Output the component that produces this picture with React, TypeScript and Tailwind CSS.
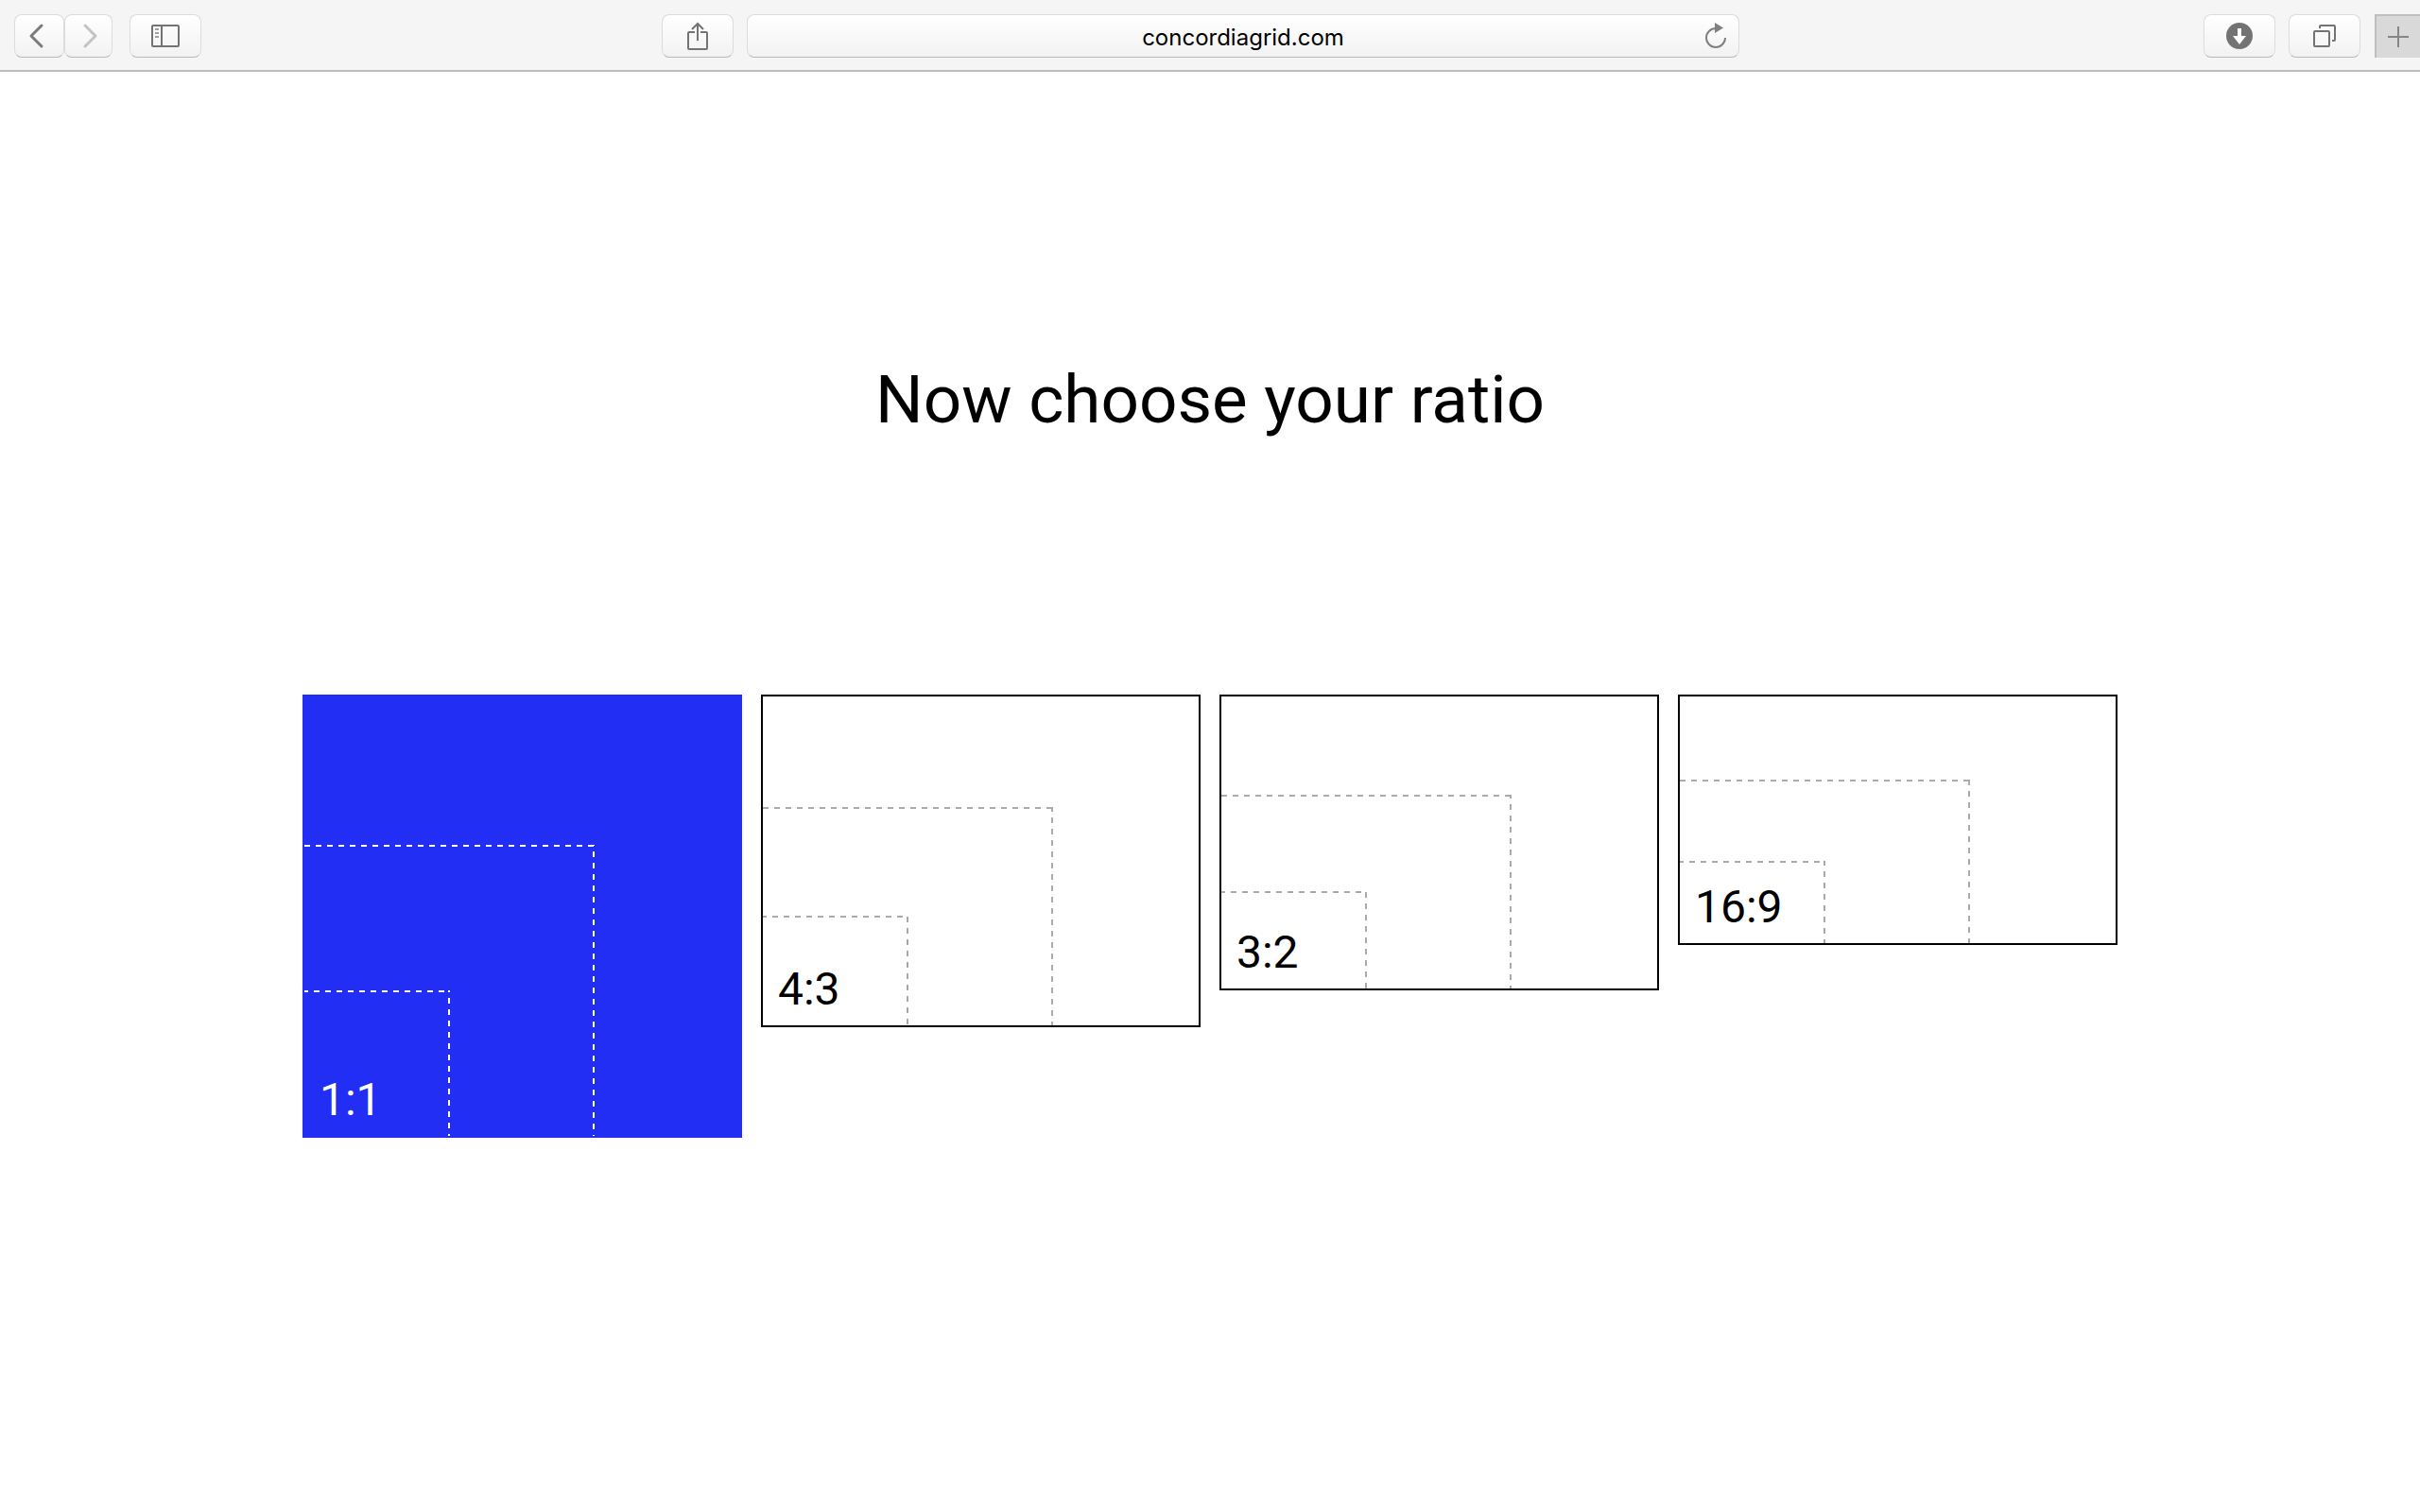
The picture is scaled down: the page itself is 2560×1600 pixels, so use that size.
import { useState, type ReactNode } from 'react';
import clsx from 'clsx';

interface Ratio {
  label: string;
  w: number;
  h: number;
  padding: string;
  // dash offsets of the vertical guide lines, large and small
  phases: [number, number];
}

const ratios: Ratio[] = [
  { label: '1:1', w: 1, h: 1, padding: 'pb-[100%]', phases: [5, 4] },
  { label: '4:3', w: 4, h: 3, padding: 'pb-[calc(75%-1px)]', phases: [1, 11] },
  { label: '3:2', w: 3, h: 2, padding: 'pb-[calc(66.66%-1px)]', phases: [2, 11] },
  { label: '16:9', w: 16, h: 9, padding: 'pb-[calc(56.25%-1px)]', phases: [0, 1] },
];

interface ToolbarButtonProps {
  label: string;
  className: string;
  children: ReactNode;
}

function ToolbarButton({ label, className, children }: ToolbarButtonProps) {
  return (
    <button
      type="button"
      aria-label={label}
      className={clsx(
        'flex h-[46px] shrink-0 items-center justify-center rounded-lg border border-[#dcdcdc] border-b-[#b9b9b9] bg-linear-to-b from-white to-[#f2f2f2] text-[#737373]',
        className
      )}
    >
      {children}
    </button>
  );
}

function Toolbar() {
  return (
    <header className="flex h-[76px] items-center border-b-2 border-[#bfbfbf] bg-[#f5f5f5] pt-0.5">
      <div className="flex flex-1 items-center pl-[15px]">
        <ToolbarButton label="Back" className="w-[53px]">
          <svg width="30" height="30" viewBox="0 0 30 30" fill="none" stroke="#7b7b7b" strokeWidth="3" strokeLinecap="round" strokeLinejoin="round">
            <path d="M17 4 6 15l11 11" />
          </svg>
        </ToolbarButton>
        <ToolbarButton label="Forward" className="w-[51px]">
          <svg width="30" height="30" viewBox="0 0 30 30" fill="none" stroke="#c3c3c3" strokeWidth="3" strokeLinecap="round" strokeLinejoin="round">
            <path d="m11 4 11 11-11 11" />
          </svg>
        </ToolbarButton>
        <ToolbarButton label="Show sidebar" className="ml-[18px] w-[76px]">
          <svg width="30" height="24" viewBox="0 0 30 24" fill="none" stroke="currentColor" strokeWidth="2">
            <rect x="1" y="1" width="28" height="22" rx="1" />
            <path d="M11 1v22" />
            <path d="M4 5h4M4 9h4M4 13h4" stroke="#a0a0a0" />
          </svg>
        </ToolbarButton>
      </div>

      <div className="mr-[35px] flex w-[44.5%] items-center gap-[14px]">
        <ToolbarButton label="Share" className="w-[76px]">
          <svg width="24" height="32" viewBox="0 0 24 32" fill="none" stroke="currentColor" strokeWidth="2">
            <path d="M9 12H3a1 1 0 0 0-1 1v16a1 1 0 0 0 1 1h18a1 1 0 0 0 1-1V13a1 1 0 0 0-1-1h-6" />
            <path d="M12 21V3M6 9l6-6 6 6" />
          </svg>
        </ToolbarButton>
        <div className="relative flex-1">
          <input
            type="text"
            aria-label="Address"
            defaultValue="concordiagrid.com"
            className="block h-[46px] w-full rounded-lg border border-[#dcdcdc] border-b-[#b9b9b9] bg-linear-to-b from-white to-[#f2f2f2] px-12 pt-0.5 text-center font-[Inter,sans-serif] text-[24px] text-black outline-none"
          />
          <button type="button" aria-label="Reload" className="absolute top-2 right-3">
            <svg width="26" height="30" viewBox="0 0 26 30" fill="none">
              <path d="M13 7a10 10 0 1 0 10 10" stroke="#808080" strokeWidth="2" />
              <path d="M12 1l9 5.500-9 5.500z" fill="#808080" />
            </svg>
          </button>
        </div>
      </div>

      <div className="flex flex-1 items-center justify-end">
        <ToolbarButton label="Downloads" className="w-[76px]">
          <svg width="28" height="28" viewBox="0 0 28 28">
            <circle cx="14" cy="14" r="14" fill="currentColor" />
            <path d="M12 6h4v8h5l-7 9-7-9h5z" fill="#fff" />
          </svg>
        </ToolbarButton>
        <ToolbarButton label="Show all tabs" className="ml-[14px] w-[76px]">
          <svg width="24" height="24" viewBox="0 0 24 24" fill="none" stroke="currentColor" strokeWidth="2">
            <rect x="1" y="7" width="16" height="16" rx="1" />
            <path d="M7 4V2a1 1 0 0 1 1-1h14a1 1 0 0 1 1 1v14a1 1 0 0 1-1 1h-2" />
          </svg>
        </ToolbarButton>
        <button
          type="button"
          aria-label="New tab"
          className="ml-[15px] flex h-[46px] w-12 items-center justify-center self-end border-t-2 border-l-2 border-[#bfbfbf] bg-[#d9d9d9]"
        >
          <svg width="22" height="22" viewBox="0 0 22 22" stroke="#858585" strokeWidth="2">
            <path d="M11 0v22M0 11h22" />
          </svg>
        </button>
      </div>
    </header>
  );
}

function Guides({ ratio }: { ratio: Ratio }) {
  const width = 461;
  const fullHeight = (width * ratio.h) / ratio.w;
  const height = Math.round(fullHeight);

  return (
    <svg
      viewBox={`0 0 ${width} ${height}`}
      className="absolute bottom-0 left-0 w-full"
      fill="none"
      stroke="currentColor"
      strokeWidth="2"
      strokeDasharray="6 6"
    >
      {[2, 1].map((n, i) => {
        const right = Math.round((width * n) / 3);
        const top = height - Math.ceil((fullHeight * n) / 3);
        return (
          <g key={n}>
            <path d={`M0 ${top + 1}H${right}`} strokeDashoffset={i * 2} />
            <path d={`M${right - 1} ${top}V${height}`} strokeDashoffset={ratio.phases[i]} />
          </g>
        );
      })}
    </svg>
  );
}

interface RatioCardProps {
  ratio: Ratio;
  selected: boolean;
  onSelect: () => void;
}

function RatioCard({ ratio, selected, onSelect }: RatioCardProps) {
  return (
    <button
      type="button"
      aria-pressed={selected}
      onClick={onSelect}
      className={clsx(
        'relative border-2',
        ratio.padding,
        selected ? 'border-[#222ef4] bg-[#222ef4] text-white' : 'border-black bg-white text-[#aaaaaa]'
      )}
    >
      <Guides ratio={ratio} />
      <span
        className={clsx(
          'absolute bottom-2.5 left-4 text-[48px] leading-[56px]',
          selected ? 'text-white' : 'text-black'
        )}
      >
        {ratio.label}
      </span>
    </button>
  );
}

export default function App() {
  const [selected, setSelected] = useState('1:1');

  return (
    <div className="min-h-screen bg-white font-[Roboto,sans-serif] text-black">
      <Toolbar />
      <main className="px-[12.5%]">
        <h1 className="pt-[305px] text-center text-[71px] leading-[84px]">Now choose your ratio</h1>
        <div className="mt-[270px] grid grid-cols-4 items-start gap-5">
          {ratios.map((ratio) => (
            <RatioCard
              key={ratio.label}
              ratio={ratio}
              selected={ratio.label === selected}
              onSelect={() => setSelected(ratio.label)}
            />
          ))}
        </div>
      </main>
    </div>
  );
}
